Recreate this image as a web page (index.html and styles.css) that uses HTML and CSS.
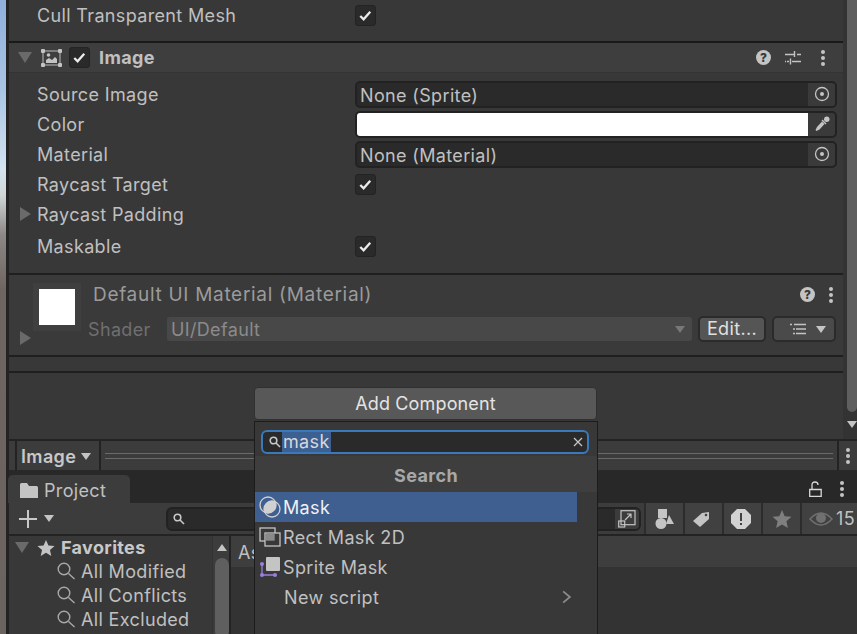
FILE: index.html
```html
<!DOCTYPE html>
<html lang="en">
<head>
    <meta charset="UTF-8">
    <title>Inspector</title>
    <link rel="stylesheet" href="styles.css">
</head>
<body>
<div class="editor">
    <div class="scene-edge"></div>
    <div class="panels">

        <div class="top">
            <div class="inspector">
                <div class="row row-cull">
                    <span class="label">Cull Transparent Mesh</span>
                    <span class="check"><svg viewBox="0 0 20 20"><path d="M4.500 10.500l3.500 3.500L15 6"/></svg></span>
                </div>

                <div class="comp-head">
                    <span class="tri-down"></span>
                    <svg class="comp-icon" viewBox="0 0 21 18"><rect x="2" y="2" width="17" height="14" fill="none" stroke="#a8a8a8" stroke-width="1.200"/><rect x="0" y="0" width="4" height="4" rx="1" fill="#c4c4c4"/><rect x="17" y="0" width="4" height="4" rx="1" fill="#c4c4c4"/><rect x="0" y="14" width="4" height="4" rx="1" fill="#c4c4c4"/><rect x="17" y="14" width="4" height="4" rx="1" fill="#c4c4c4"/><path d="M5 14v-3l3-2 3 2 3-3 2 2v4z" fill="#c4c4c4"/><circle cx="7.500" cy="6" r="1.800" fill="#c4c4c4"/></svg>
                    <span class="check"><svg viewBox="0 0 20 20"><path d="M4.500 10.500l3.500 3.500L15 6"/></svg></span>
                    <span class="comp-title">Image</span>
                    <span class="head-tools">
                        <span class="help">?</span>
                        <svg class="sliders" viewBox="0 0 16 16"><path d="M0 4.500h9M12 4.500h4M9.500 1v6M0 11.500h1M2 11.500h2M7 11.500h9M5.500 8.500v6"/></svg>
                        <span class="dots"><i></i><i></i><i></i></span>
                    </span>
                </div>

                <div class="row row-field">
                    <span class="label">Source Image</span>
                    <div class="field">
                        <span class="field-text">None (Sprite)</span>
                        <span class="field-btn"><svg viewBox="0 0 16 16"><circle cx="8" cy="8" r="6.500"/><circle cx="8" cy="8" r="2" class="solid"/></svg></span>
                    </div>
                </div>
                <div class="row row-field">
                    <span class="label">Color</span>
                    <div class="field">
                        <span class="swatch"></span>
                        <span class="field-btn"><svg viewBox="0 0 16 16"><circle class="solid" cx="12.800" cy="3.200" r="2.700"/><path class="solid" d="M8.500 3.500l4 4-1 1-4-4z"/><path class="solid" d="M8 5.500l2.500 2.500-5 5.500-3 1.500-1-1 1.500-3z"/></svg></span>
                    </div>
                </div>
                <div class="row row-field">
                    <span class="label">Material</span>
                    <div class="field">
                        <span class="field-text">None (Material)</span>
                        <span class="field-btn"><svg viewBox="0 0 16 16"><circle cx="8" cy="8" r="6.500"/><circle cx="8" cy="8" r="2" class="solid"/></svg></span>
                    </div>
                </div>
                <div class="row row-raycast">
                    <span class="label">Raycast Target</span>
                    <span class="check"><svg viewBox="0 0 20 20"><path d="M4.500 10.500l3.500 3.500L15 6"/></svg></span>
                </div>
                <div class="row row-padding">
                    <span class="tri-right"></span>
                    <span class="label">Raycast Padding</span>
                </div>
                <div class="row row-maskable">
                    <span class="label">Maskable</span>
                    <span class="check"><svg viewBox="0 0 20 20"><path d="M4.500 10.500l3.500 3.500L15 6"/></svg></span>
                </div>

                <div class="mat">
                    <span class="tri-right mat-tri"></span>
                    <div class="mat-preview"><span></span></div>
                    <div class="mat-body">
                        <div class="mat-title">
                            <span class="mat-name">Default UI Material (Material)</span>
                            <span class="help">?</span>
                            <span class="dots"><i></i><i></i><i></i></span>
                        </div>
                        <div class="mat-shader">
                            <span class="shader-label">Shader</span>
                            <div class="shader-select"><span>UI/Default</span><b class="arrow"></b></div>
                            <button class="edit">Edit...</button>
                            <button class="list-btn">
                                <svg viewBox="0 0 16 12"><path d="M4 1.500h12M6 6h10M6 10.500h10M0 1.500h2M3 6h2M3 10.500h2"/></svg>
                                <b class="arrow"></b>
                            </button>
                        </div>
                    </div>
                </div>

                <div class="spacer-bar"></div>
                <div class="add-area">
                    <button class="add-btn">Add Component</button>
                </div>
            </div>
            <div class="scroller">
                <div class="thumb"></div>
                <span class="scroll-down"></span>
            </div>
        </div>

        <div class="crumbs">
            <span class="crumb-stub"></span>
            <span class="crumb">Image<b class="arrow"></b></span>
            <span class="crumb-lines"><i></i><i></i></span>
            <span class="crumb-more"><span class="dots"><i></i><i></i><i></i></span></span>
        </div>

        <div class="tabs">
            <div class="tab">
                <svg viewBox="0 0 18 15"><path d="M0 1.500Q0 0 1.500 0H7l2 3h7.500Q18 3 18 4.500V15H0z"/></svg>
                <span>Project</span>
            </div>
            <div class="tab-tools">
                <svg class="lock" viewBox="0 0 13 16"><path d="M.7 8.500h11.500v6.800H.7zM3 8.500V4Q3 1 6 1t3 3"/></svg>
                <span class="dots"><i></i><i></i><i></i></span>
            </div>
        </div>

        <div class="toolbar">
            <svg class="plus" viewBox="0 0 18 18"><path d="M9 0v18M0 9h18"/></svg>
            <b class="arrow"></b>
            <div class="tool-search">
                <svg class="glass-small" viewBox="0 0 12 12"><circle cx="4.500" cy="4.500" r="3.300"/><path d="M7 7l4 4"/></svg>
                <span class="tool-search-end"><svg viewBox="0 0 18 18"><rect x="3" y=".7" width="14" height="14"/><rect x=".7" y="11" width="6" height="6"/><path d="M7 10l6-6M9 4h4v4"/></svg></span>
            </div>
            <span class="tool-btn"><svg viewBox="0 0 20 20"><rect x="3" y="0" width="9" height="9" fill="#c4c4c4"/><circle cx="6" cy="14.500" r="5.500" fill="#c4c4c4"/><path d="M14 6l5 9h-8z" fill="#c4c4c4"/></svg></span>
            <span class="tool-btn"><svg class="icon-left" viewBox="0 0 20 20"><path d="M1 12L10 4l7-1v7l-9 8z" fill="#c4c4c4"/><circle cx="14" cy="6" r="1.300" fill="#414141"/></svg></span>
            <span class="tool-btn"><svg class="icon-left" viewBox="0 0 20 20"><path d="M6 0h8l6 6v8l-6 6H6l-6-6V6z" fill="#d2d2d2"/><path d="M9 4h2v8H9zM9 14h2v2H9z" fill="#414141"/></svg></span>
            <span class="tool-btn"><svg viewBox="0 0 20 20"><path d="M10 1l2.700 6.200 6.800.6-5.100 4.500 1.500 6.700L10 15.400 4.100 19l1.500-6.700L.5 7.800l6.800-.6z" fill="#7f7f7f"/></svg></span>
            <span class="tool-btn tool-eye">
                <svg viewBox="0 0 24 14"><path d="M1 7Q12-5 23 7 12 19 1 7z" fill="none" stroke="#707070" stroke-width="1.500"/><circle cx="12" cy="6" r="5" fill="#707070"/></svg>
                <span>15</span>
            </span>
        </div>

        <div class="browser">
            <div class="tree">
                <div class="tree-list">
                    <div class="fav-head">
                        <span class="tri-down"></span>
                        <svg viewBox="0 0 20 20"><path d="M10 1l2.700 6.200 6.800.6-5.100 4.500 1.500 6.700L10 15.400 4.100 19l1.500-6.700L.5 7.800l6.800-.6z" fill="#c4c4c4"/></svg>
                        <span>Favorites</span>
                    </div>
                    <div class="fav-row"><svg viewBox="0 0 18 18"><circle cx="7" cy="7" r="5.800"/><path d="M11.500 11.500l6 5.500"/></svg><span>All Modified</span></div>
                    <div class="fav-row"><svg viewBox="0 0 18 18"><circle cx="7" cy="7" r="5.800"/><path d="M11.500 11.500l6 5.500"/></svg><span>All Conflicts</span></div>
                    <div class="fav-row"><svg viewBox="0 0 18 18"><circle cx="7" cy="7" r="5.800"/><path d="M11.500 11.500l6 5.500"/></svg><span>All Excluded</span></div>
                </div>
                <div class="tree-scroll">
                    <span class="scroll-up"></span>
                    <div class="tree-thumb"></div>
                </div>
            </div>
            <div class="assets">
                <div class="assets-head">As</div>
            </div>
        </div>
    </div>
</div>

<!-- add component popup, sits over everything -->
<div class="popup">
    <div class="pop-search">
        <svg class="glass-small" viewBox="0 0 12 12"><circle cx="4.500" cy="4.500" r="3.300"/><path d="M7 7l4 4"/></svg>
        <span class="pop-value">mask</span>
        <svg class="pop-clear" viewBox="0 0 10 10"><path d="M1 1l8 8M9 1l-8 8"/></svg>
    </div>
    <div class="pop-title">Search</div>
    <ul class="pop-list">
        <li class="selected">
            <svg viewBox="0 0 22 22"><circle cx="9" cy="9" r="8" fill="none" stroke="#d0d0d0" stroke-width="1.300"/><circle cx="13" cy="13" r="8" fill="none" stroke="#d0d0d0" stroke-width="1.300"/><path d="M16.300 5.700A8 8 0 0 1 5.700 16.300 8 8 0 0 1 16.300 5.700z" fill="#d0d0d0"/></svg>
            <span>Mask</span>
        </li>
        <li>
            <svg viewBox="0 0 22 22"><rect x="1" y="2" width="15" height="13" fill="none" stroke="#c4c4c4" stroke-width="1.300"/><rect x="6" y="7" width="15" height="13" fill="#383838" stroke="#c4c4c4" stroke-width="1.300"/><rect x="6.700" y="7.700" width="9" height="7" fill="#8a8a8a"/></svg>
            <span>Rect Mask 2D</span>
        </li>
        <li>
            <svg viewBox="0 0 22 22"><path d="M3 8v11h13" fill="none" stroke="#9a7fe0" stroke-width="1.300"/><circle cx="3" cy="8" r="2" fill="#9a7fe0"/><circle cx="3" cy="19" r="2" fill="#9a7fe0"/><circle cx="16" cy="19" r="2" fill="#9a7fe0"/><rect x="7" y="1" width="14" height="14" rx="1" fill="#c4c4c4"/></svg>
            <span>Sprite Mask</span>
        </li>
        <li class="no-icon">
            <span>New script</span>
            <svg class="chevron" viewBox="0 0 8 12"><path d="M1 1l6 5-6 5"/></svg>
        </li>
    </ul>
</div>
</body>
</html>
```

FILE: styles.css
```css
* {
    box-sizing: border-box;
}
html, body {
    margin: 0;
    height: 634px;
    overflow: hidden;
}
body {
    position: relative;
    background-color: #383838;
    color: #c0c0c0;
    font-family: Inter, "Liberation Sans", sans-serif;
    font-size: 18px;
    letter-spacing: .35px;
}
button {
    font: inherit;
    letter-spacing: inherit;
    padding: 0;
}

/* page frame */
.editor {
    display: flex;
    height: 634px;
}
.scene-edge {
    width: 6px;
    background: linear-gradient(#8fb0dc, #a9c4e4 90px, #d3e3ef 170px, #d0d6d8 195px, #8c8785 235px, #6f6560 290px, #6b635f);
}
.panels {
    width: 851px;
    border-left: 3px solid #232323;
    display: flex;
    flex-direction: column;
}
.top {
    display: flex;
    flex: none;
    height: 439px;
}
.inspector {
    width: 834px;
    flex: none;
}

/* rows */
.row {
    display: flex;
    align-items: center;
    padding-left: 28px;
}
.label {
    width: 318px;
    flex: none;
}
.row-cull {
    height: 41px;
    padding-bottom: 11px;
}
.row-field {
    height: 30px;
}
.row-raycast {
    height: 30px;
}
.row-padding {
    height: 30px;
    padding-left: 11px;
}
.row-padding .label {
    margin-left: 6px;
}
.row-maskable {
    height: 34px;
}
.check {
    width: 21px;
    height: 21px;
    flex: none;
    background-color: #2a2a2a;
    border: 1px solid #232323;
    border-radius: 3px;
    display: block;
}
.check svg {
    display: block;
    width: 19px;
    height: 19px;
    fill: none;
    stroke: #ececec;
    stroke-width: 2.400;
}

/* component header */
.comp-head {
    height: 32px;
    margin-bottom: 6px;
    border-top: 2px solid #1a1a1a;
    border-bottom: 1px solid #333;
    background-color: #3e3e3e;
    display: flex;
    align-items: center;
    padding-left: 9px;
}
.tri-down {
    width: 0;
    height: 0;
    flex: none;
    border-left: 7px solid transparent;
    border-right: 7px solid transparent;
    border-top: 11px solid #6a6a6a;
}
.tri-right {
    width: 0;
    height: 0;
    flex: none;
    border-top: 7px solid transparent;
    border-bottom: 7px solid transparent;
    border-left: 11px solid #6a6a6a;
}
.comp-icon {
    width: 21px;
    height: 18px;
    margin: 0 7px 0 9px;
    flex: none;
}
.comp-title {
    font-weight: 700;
    margin-left: 9px;
}
.head-tools {
    margin-left: auto;
    display: flex;
    align-items: center;
    padding-right: 18px;
}
.head-tools .sliders {
    margin: 0 20px 0 14px;
}
.help {
    width: 15px;
    height: 15px;
    flex: none;
    border-radius: 50%;
    background-color: #c4c4c4;
    color: #383838;
    font-size: 12px;
    font-weight: 800;
    letter-spacing: 0;
    line-height: 15px;
    text-align: center;
    display: block;
}
.sliders {
    width: 16px;
    height: 16px;
    fill: none;
    stroke: #c4c4c4;
    stroke-width: 1.400;
}
.dots {
    display: flex;
    flex-direction: column;
    flex: none;
    gap: 2px;
    width: 4px;
}
.dots i {
    width: 4px;
    height: 4px;
    border-radius: 50%;
    background-color: #c4c4c4;
}

/* object fields */
.field {
    width: 482px;
    height: 27px;
    background-color: #2a2a2a;
    border: 2px solid #222;
    border-radius: 5px;
    display: flex;
    overflow: hidden;
}
.field-text {
    flex: 1;
    padding-left: 3px;
    line-height: 25px;
}
.swatch {
    flex: 1;
    background-color: #fff;
}
.field-btn {
    width: 27px;
    background-color: #3a3a3a;
    display: flex;
    align-items: center;
    justify-content: center;
}
.field-btn svg {
    width: 16px;
    height: 16px;
    fill: none;
    stroke: #c4c4c4;
    stroke-width: 1.300;
}
.field-btn .solid {
    fill: #c4c4c4;
    stroke: none;
}

/* material block */
.mat {
    height: 84px;
    margin-top: 10px;
    border-top: 2px solid #1f1f1f;
    border-bottom: 2px solid #1f1f1f;
    background-color: #3a3a3a;
    display: flex;
    padding-left: 11px;
}
.mat-tri {
    margin-top: 56px;
}
.mat-preview {
    width: 48px;
    height: 48px;
    margin: 8px 0 0 2px;
    background-color: #3f3f3f;
    padding: 6px;
    flex: none;
}
.mat-preview span {
    display: block;
    width: 36px;
    height: 36px;
    background-color: #fff;
}
.mat-body {
    flex: 1;
}
.mat-title {
    height: 25px;
    margin-top: 7px;
    padding: 0 10px 0 12px;
    display: flex;
    align-items: center;
    color: #9b9b9b;
}
.mat-name {
    font-size: 19px;
    letter-spacing: .7px;
}
.mat-title .help {
    margin-left: auto;
    margin-right: 14px;
}
.mat-shader {
    display: flex;
    align-items: center;
    height: 26px;
    margin-top: 9px;
    padding-left: 7px;
}
.shader-label {
    width: 79px;
    color: #6f6f6f;
}
.shader-select {
    width: 525px;
    height: 24px;
    background-color: #484848;
    border-radius: 3px;
    color: #8b8b8b;
    padding: 0 7px 0 4px;
    display: flex;
    align-items: center;
    justify-content: space-between;
}
.arrow {
    display: block;
    width: 0;
    height: 0;
    flex: none;
    border-left: 5px solid transparent;
    border-right: 5px solid transparent;
    border-top: 7px solid #c4c4c4;
}
.shader-select .arrow {
    border-top-color: #777;
}
.edit, .list-btn {
    height: 26px;
    margin-left: 6px;
    background-color: #555;
    border: 2px solid #2b2b2b;
    border-radius: 5px;
    color: #e0e0e0;
}
.edit {
    width: 68px;
    line-height: 20px;
}
.list-btn {
    width: 64px;
    background-color: #4a4a4a;
    display: flex;
    align-items: center;
    justify-content: space-between;
    padding: 0 8px 0 16px;
}
.list-btn svg {
    width: 16px;
    height: 12px;
    fill: none;
    stroke: #c4c4c4;
    stroke-width: 1.300;
}

.spacer-bar {
    height: 16px;
    border-bottom: 2px solid #1f1f1f;
}
.add-area {
    display: flex;
    padding: 14px 0 0 245px;
}
.add-btn {
    width: 343px;
    height: 33px;
    background-color: #585858;
    border: 1px solid #303030;
    border-radius: 4px;
    color: #e4e4e4;
    letter-spacing: .15px;
}

/* scrollbar right of inspector */
.scroller {
    width: 14px;
    flex: none;
    background-color: #333;
    padding-left: 4px;
}
.thumb {
    height: 412px;
    background-color: #5f5f5f;
    border-radius: 0 0 5px 5px;
}
.scroll-down {
    display: block;
    width: 0;
    height: 0;
    margin-top: 9px;
    border-left: 5px solid transparent;
    border-right: 5px solid transparent;
    border-top: 7px solid #c4c4c4;
}

/* breadcrumb bar */
.crumbs {
    display: flex;
    flex: none;
    height: 31px;
    border-top: 2px solid #232323;
    gap: 2px;
    background-color: #232323;
}
.crumb-stub {
    width: 6px;
    background-color: #3c3c3c;
}
.crumb {
    width: 82px;
    background-color: #3c3c3c;
    font-weight: 600;
    padding: 2px 0 0 4px;
    display: flex;
    align-items: center;
    gap: 5px;
    color: #c8c8c8;
}
.crumb-lines {
    width: 736px;
    background-color: #3c3c3c;
    padding: 12px 4px 0;
}
.crumb-lines i {
    display: block;
    height: 1px;
    background-color: #6a6a6a;
    margin-bottom: 4px;
}
.crumb-more {
    flex: 1;
    background-color: #3c3c3c;
    display: flex;
    align-items: center;
    justify-content: center;
}

/* project tabs */
.tabs {
    height: 33px;
    flex: none;
    padding-top: 5px;
    background-color: #282828;
    display: flex;
}
.tab {
    width: 122px;
    margin-left: -1px;
    padding: 2px 0 0 12px;
    background-color: #3c3c3c;
    border-radius: 5px 5px 0 0;
    display: flex;
    align-items: center;
    gap: 6px;
}
.tab svg {
    width: 18px;
    height: 15px;
    fill: #c4c4c4;
}
.tab-tools {
    margin-left: auto;
    display: flex;
    align-items: center;
    gap: 18px;
    padding-right: 13px;
}
.lock {
    width: 13px;
    height: 16px;
    fill: none;
    stroke: #d8d8d8;
    stroke-width: 1.300;
}

/* toolbar */
.toolbar {
    height: 31px;
    flex: none;
    background-color: #3c3c3c;
    display: flex;
    align-items: center;
    padding-left: 10px;
}
.plus {
    width: 18px;
    height: 18px;
    flex: none;
    fill: none;
    stroke: #c8c8c8;
    stroke-width: 2;
}
.toolbar .arrow {
    margin-left: 7px;
}
.tool-search {
    width: 475px;
    height: 24px;
    flex: none;
    margin: 0 3px 0 112px;
    background-color: #2a2a2a;
    border: 2px solid #222;
    border-radius: 6px;
    display: flex;
    align-items: center;
    padding-left: 5px;
    overflow: hidden;
}
.glass-small {
    width: 12px;
    height: 12px;
    flex: none;
    fill: none;
    stroke: #c8c8c8;
    stroke-width: 1.600;
}
.tool-search-end {
    margin-left: auto;
    width: 24px;
    height: 24px;
    background-color: #3c3c3c;
    display: flex;
    align-items: center;
    justify-content: center;
}
.tool-search-end svg {
    width: 18px;
    height: 18px;
    fill: none;
    stroke: #c4c4c4;
    stroke-width: 1.200;
}
.tool-btn {
    width: 39px;
    height: 31px;
    flex: none;
    background-color: #414141;
    border-left: 2px solid #2c2c2c;
    display: flex;
    align-items: center;
    justify-content: center;
}
.tool-btn svg {
    width: 20px;
    height: 20px;
}
.tool-btn .icon-left {
    margin-right: 3px;
}
.tool-eye {
    flex: 1;
    justify-content: flex-start;
    padding-left: 7px;
    gap: 3px;
}
.tool-eye svg {
    width: 24px;
    height: 14px;
}

/* project browser */
.browser {
    flex: 1;
    min-height: 0;
    display: flex;
    border-top: 2px solid #232323;
}
.tree {
    width: 222px;
    display: flex;
    border-right: 2px solid #232323;
}
.tree-list {
    width: 204px;
    padding: 0 0 0 6px;
}
.fav-head {
    height: 23px;
    display: flex;
    align-items: center;
    font-weight: 700;
    color: #c8c8c8;
}
.fav-head .tri-down {
    margin-right: 8px;
}
.fav-head svg {
    width: 18px;
    height: 18px;
    margin-right: 6px;
}
.fav-row {
    height: 24px;
    display: flex;
    align-items: center;
    padding-left: 42px;
    gap: 6px;
}
.fav-row svg {
    width: 18px;
    height: 18px;
    fill: none;
    stroke: #a8a8a8;
    stroke-width: 1.400;
}
.tree-scroll {
    flex: 1;
    background-color: #3c3c3c;
    border-left: 1px solid #333;
    padding: 8px 0 0 2px;
}
.scroll-up {
    display: block;
    width: 0;
    height: 0;
    margin: 0 0 7px 2px;
    border-left: 5px solid transparent;
    border-right: 5px solid transparent;
    border-bottom: 7px solid #c4c4c4;
}
.tree-thumb {
    width: 14px;
    height: 80px;
    border-radius: 7px;
    background-color: #5f5f5f;
}
.assets {
    flex: 1;
    background-color: #333;
}
.assets-head {
    height: 31px;
    background-color: #3e3e3e;
    padding: 6px 0 0 7px;
}

/* popup */
.popup {
    position: absolute;
    left: 254px;
    top: 421px;
    width: 344px;
    height: 220px;
    background-color: #383838;
    border: 1px solid #1c1c1c;
    border-bottom: 0;
}
.pop-search {
    height: 24px;
    margin: 8px 8px 0 6px;
    background-color: #2a2a2a;
    border: 2px solid #3a79bb;
    border-radius: 6px;
    display: flex;
    align-items: center;
    padding-left: 6px;
}
.pop-value {
    margin-left: 1px;
    padding: 0 1px;
    height: 20px;
    line-height: 20px;
    background-color: #3d6092;
    color: #d8d8d8;
}
.pop-clear {
    width: 10px;
    height: 10px;
    margin-left: auto;
    margin-right: 4px;
    fill: none;
    stroke: #c8c8c8;
    stroke-width: 1.200;
}
.pop-title {
    height: 36px;
    margin-top: 2px;
    background-color: #3e3e3e;
    color: #a8a8a8;
    font-weight: 700;
    text-align: center;
    line-height: 40px;
}
.pop-list {
    list-style: none;
    margin: 0;
    padding: 0;
}
.pop-list li {
    width: 322px;
    height: 30px;
    display: flex;
    align-items: center;
    padding-left: 4px;
    gap: 2px;
}
.pop-list li svg {
    width: 22px;
    height: 22px;
    flex: none;
}
.pop-list .selected {
    background-color: #3e5f90;
    color: #f0f0f0;
}
.pop-list .no-icon {
    padding-left: 29px;
}
.pop-list li .chevron {
    width: 9px;
    height: 14px;
    margin-left: auto;
    margin-right: 6px;
    fill: none;
    stroke: #8c8c8c;
    stroke-width: 1.500;
}
```
